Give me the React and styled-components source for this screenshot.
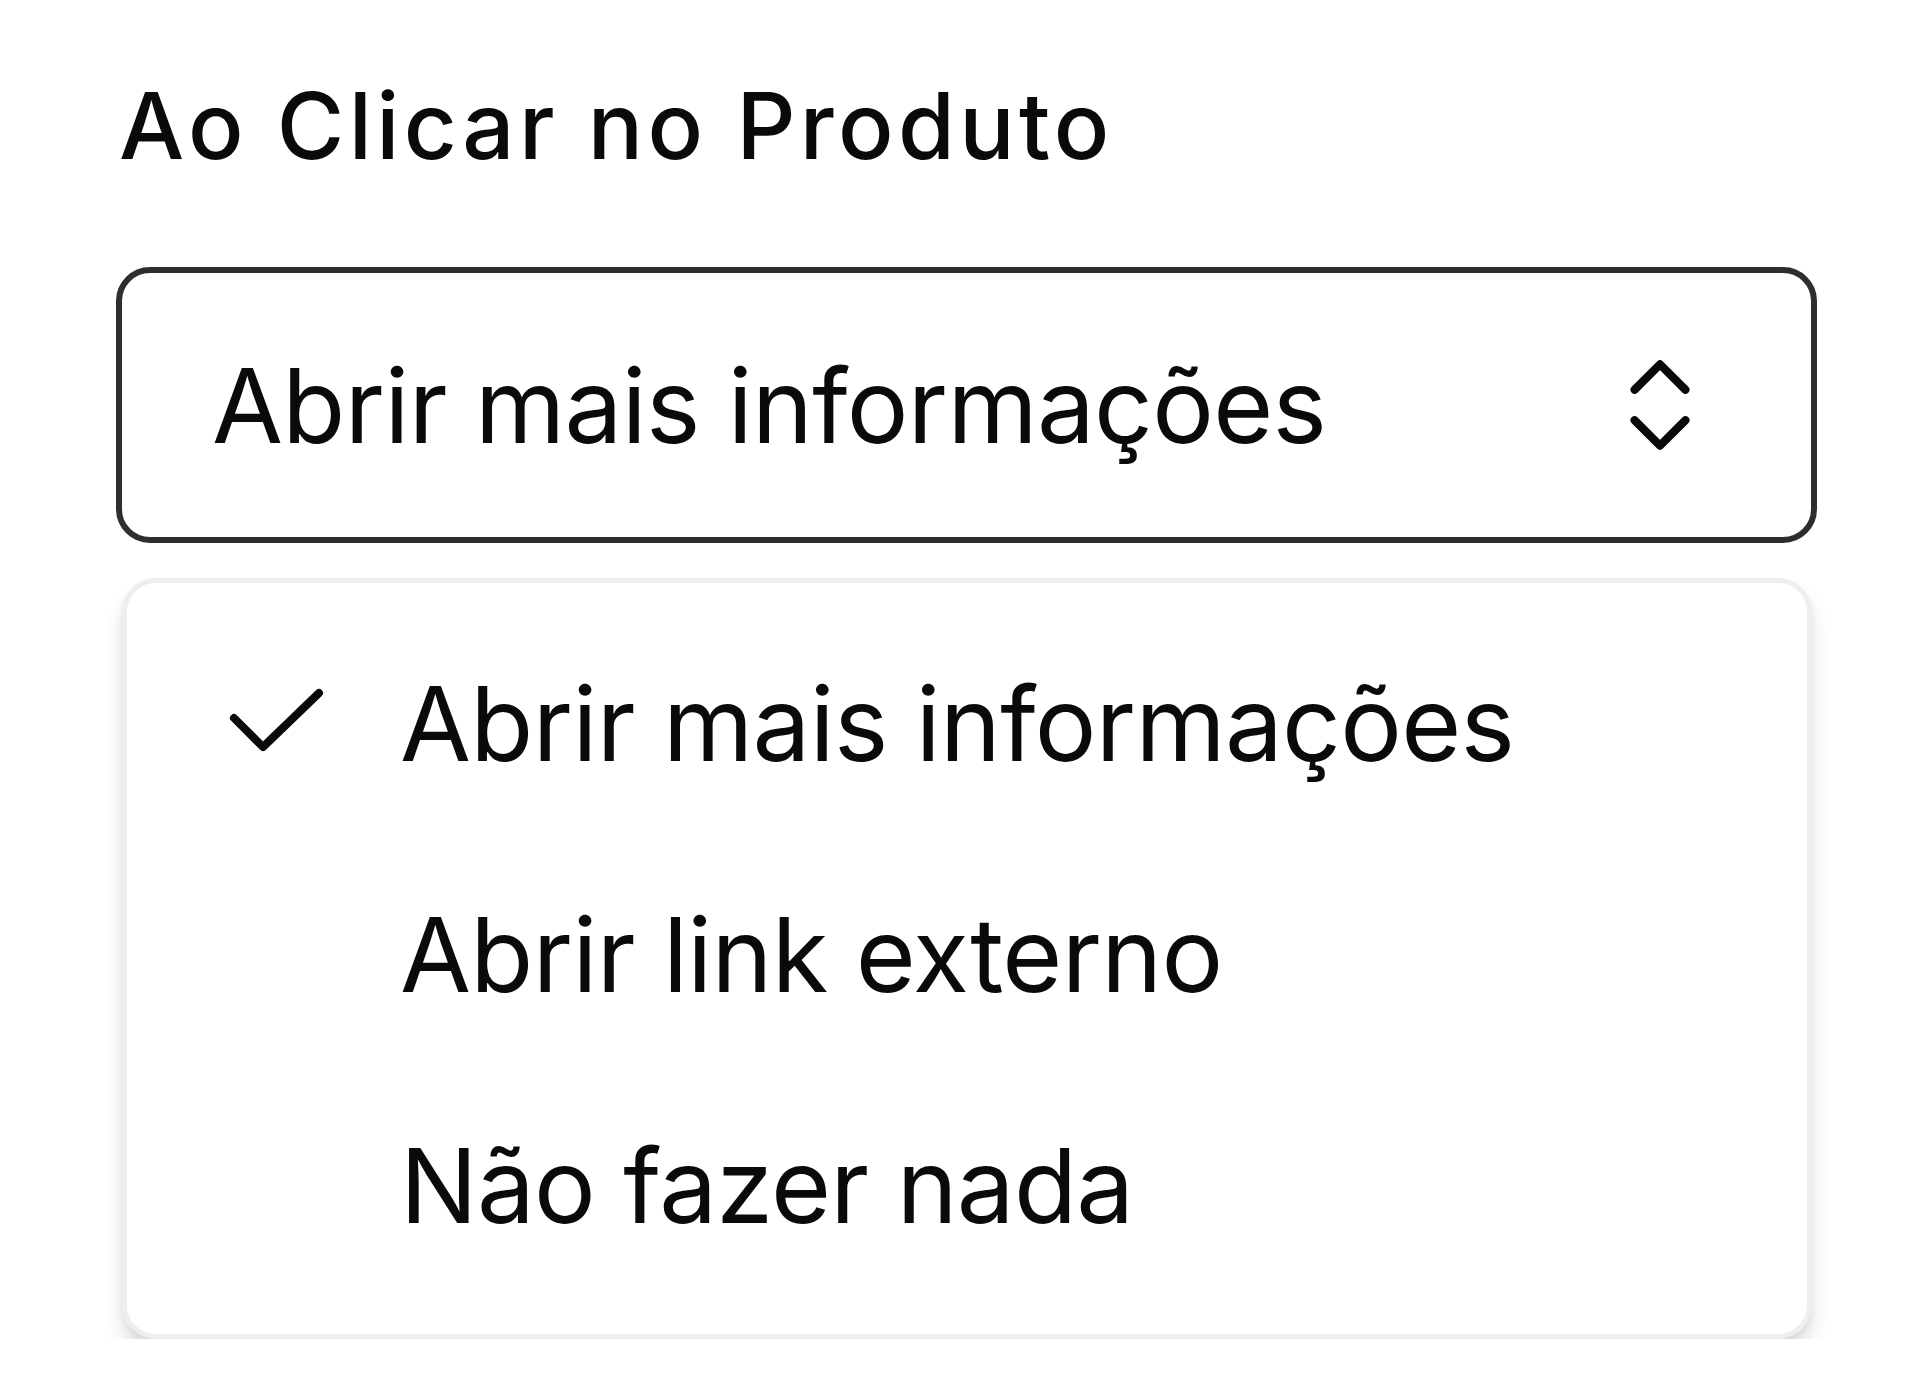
import React from 'react';
import styled, { createGlobalStyle } from 'styled-components';
import { ChevronsUpDown } from 'lucide-react';

const GlobalStyle = createGlobalStyle`
  html, body {
    margin: 0;
    padding: 0;
    background: #ffffff;
  }
  body {
    font-family: Inter, "Noto Sans", "Liberation Sans", sans-serif;
    color: #0a0a0a;
  }
`;

const Field = styled.section`
  width: 1701px;
  padding: 80px 0 0 116px;
  display: flex;
  flex-direction: column;
`;

const Label = styled.label`
  margin: 0 0 95px 3px;
  font-size: 92px;
  font-weight: 500;
  letter-spacing: 4.4px;
  line-height: 1;
  color: #0a0a0a;
`;

const Trigger = styled.button`
  box-sizing: border-box;
  width: 100%;
  height: 276px;
  padding: 0 90px 0 90px;
  display: flex;
  align-items: center;
  justify-content: space-between;
  border: 6px solid #2e2e2e;
  border-radius: 34px;
  background: #ffffff;
  font-family: inherit;
  font-size: 103px;
  font-weight: 400;
  letter-spacing: -0.7px;
  color: #0a0a0a;
  cursor: pointer;
`;

const Menu = styled.ul`
  box-sizing: border-box;
  list-style: none;
  margin: 35px 0 0 6px;
  width: 1690px;
  padding: 25px 0 33px;
  border: 5px solid #eeeef0;
  border-radius: 34px;
  background: #ffffff;
  box-shadow: 0 16px 20px rgba(0, 0, 0, 0.12), 0 4px 6px rgba(0, 0, 0, 0.05);
`;

const Item = styled.li`
  height: 231px;
  padding-left: 101px;
  display: grid;
  grid-template-columns: 172px 1fr;
  align-items: center;
  font-size: 103px;
  letter-spacing: -0.7px;
  line-height: 1;
  color: #0a0a0a;
`;

const Indicator = styled.span`
  display: flex;
  align-items: center;
  margin-top: -6px;
`;

const CheckMark = () => (
  <svg width="96" height="66" viewBox="0 0 96 66" fill="none">
    <path d="M6 30 L35 59 L91 5" stroke="#0a0a0a" strokeWidth="8" strokeLinecap="round" strokeLinejoin="round" />
  </svg>
);

const options = ['Abrir mais informações', 'Abrir link externo', 'Não fazer nada'];

export default function App() {
  const selected = options[0];
  return (
    <>
      <GlobalStyle />
      <Field>
        <Label>Ao Clicar no Produto</Label>
        <Trigger type="button">
          <span>{selected}</span>
          <ChevronsUpDown size={122} strokeWidth={1.6} color="#0a0a0a" />
        </Trigger>
        <Menu>
          {options.map((opt) => (
            <Item key={opt}>
              <Indicator>{opt === selected && <CheckMark />}</Indicator>
              <span>{opt}</span>
            </Item>
          ))}
        </Menu>
      </Field>
    </>
  );
}
